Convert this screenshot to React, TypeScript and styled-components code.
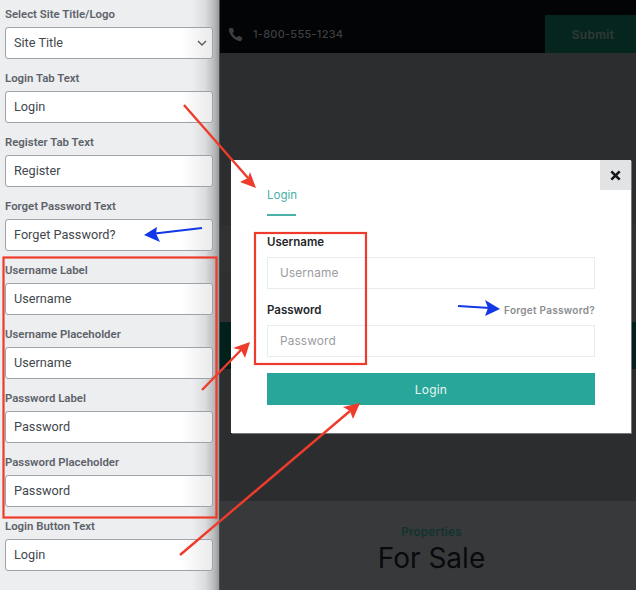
import React from "react";
import styled, { createGlobalStyle } from "styled-components";

const Global = createGlobalStyle`
  html, body { margin: 0; padding: 0; width: 636px; height: 590px; overflow: hidden; background: #2c2d2f; }
  * { box-sizing: border-box; }
`;
const Shell = styled.div`
  position: relative; width: 636px; height: 590px; display: flex; overflow: hidden;
  font-family: Inter, "Liberation Sans", sans-serif;
`;
const Sidebar = styled.aside`
  width: 220px; height: 590px; flex: none; padding: 5px 6px 0 5px; display: flex; flex-direction: column;
  font-family: Roboto, "Liberation Sans", sans-serif;
  background: linear-gradient(90deg, #edeef0 0, #edeef0 192px, #dcddde 205px, #b9babb 214px, #98999b 219px);
  border-right: 1px solid #4a4b4d;
`;
const Field = styled.label`
  display: flex; flex-direction: column; height: 64px; flex: none;
`;
const FieldLabel = styled.span`
  height: 22px; padding-top: 1px; line-height: 16px; font-size: 11.4px; font-weight: 600; color: #5d636a; white-space: nowrap;
`;
const InputBox = styled.div`
  position: relative; width: 208px; height: 32px; background: linear-gradient(90deg, #fff 0, #fff 175px, #e9e9ea 208px); border: 1px solid #9da3a9; border-radius: 3px;
  display: flex; align-items: center; padding-left: 8px; padding-bottom: 2px; font-size: 12.7px; color: #42474d;
`;
const Chevron = styled.svg`
  position: absolute; right: 4px; top: 9px; width: 12px; height: 12px;
`;
const Page = styled.main`
  flex: 1; display: flex; flex-direction: column; height: 590px; min-width: 0;
`;
const TopBar = styled.div`
  height: 53px; flex: none; background: #030405; display: flex; align-items: flex-end; justify-content: space-between;
`;
const Phone = styled.div`
  display: flex; align-items: center; gap: 9px; height: 38px; padding-left: 7px; color: #3e3f41; font-size: 11px; font-weight: 500; letter-spacing: .25px;
`;
const SubmitBlock = styled.div`
  width: 91px; height: 38px; display: flex; align-items: center; justify-content: center; padding-left: 5px; background: #07251f; color: #303a38; font-size: 12px; font-weight: 600; letter-spacing: .3px;
`;
const Band = styled.div<{ $h: number; $bg: string }>`
  height: ${p => p.$h}px; flex: none; background: ${p => p.$bg};
`;
const Section = styled.section`
  flex: 1; background: #38393b; display: flex; flex-direction: column; align-items: center; padding: 24px 0 0 7px;
`;
const Eyebrow = styled.div`
  font-size: 11.7px; line-height: 14px; font-weight: 600; color: #12332d; letter-spacing: .2px;
`;
const Heading = styled.h2`
  margin: 3px 0 0; font-size: 28px; line-height: 32px; font-weight: 400; color: #090a0b;
`;
const Modal = styled.div`
  position: absolute; left: 231px; top: 160px; width: 400px; height: 273px; background: #fff; padding: 0 36px;
  display: flex; flex-direction: column; box-shadow: 1px 1px 0 #77787a;
`;
const Close = styled.div`
  position: absolute; right: 0; top: 0; width: 31px; height: 30px; background: #e2e3e5; display: flex; align-items: center; justify-content: center;
`;
const Tab = styled.div`
  margin-top: 28px; width: 29px; height: 28px; border-bottom: 2px solid #4bb0a6; color: #48b0a6; font-size: 11.5px; line-height: 15px; font-weight: 400;
`;
const ModalRow = styled.div`
  display: flex; justify-content: space-between; align-items: center; height: 16px;
`;
const ModalLabel = styled.span`
  font-size: 11.5px; font-weight: 600; color: #23262a;
`;
const Forgot = styled.span`
  font-size: 10px; font-weight: 600; color: #8a8c8f; letter-spacing: .28px;
`;
const ModalInput = styled.div`
  height: 32px; margin-top: 7px; border: 1px solid #e8ecee; padding-left: 12px; display: flex; align-items: center; font-size: 11.8px; color: #9a9c9f; letter-spacing: .15px;
`;
const FormTop = styled.div`
  margin-top: 18px;
`;
const FormGap = styled.div`
  margin-top: 13px;
`;
const LoginButton = styled.div`
  margin-top: 16px; height: 32px; background: #27a699; color: #e9f6f4; display: flex; align-items: center; justify-content: center; font-size: 12px; letter-spacing: .2px;
`;
const Annotations = styled.svg`
  position: absolute; left: 0; top: 0; width: 636px; height: 590px; pointer-events: none;
`;

const fields = [
  ["Login Tab Text", "Login"], ["Register Tab Text", "Register"], ["Forget Password Text", "Forget Password?"],
  ["Username Label", "Username"], ["Username Placeholder", "Username"], ["Password Label", "Password"],
  ["Password Placeholder", "Password"], ["Login Button Text", "Login"],
];
const RED = "#ee3b2b", BLUE = "#1238e8";

export default function App() {
  return (
    <Shell>
      <Global />
      <Sidebar>
        <Field>
          <FieldLabel>Select Site Title/Logo</FieldLabel>
          <InputBox>
            Site Title
            <Chevron viewBox="0 0 12 12" fill="none" stroke="#555a60" strokeWidth="1.4"><path d="M2 4l4 4 4-4" /></Chevron>
          </InputBox>
        </Field>
        {fields.map(([l, v]) => (
          <Field key={l}>
            <FieldLabel>{l}</FieldLabel>
            <InputBox>{v}</InputBox>
          </Field>
        ))}
      </Sidebar>
      <Page>
        <TopBar>
          <Phone>
            <svg width="17" height="17" viewBox="0 0 24 24" fill="#3e3f41"><path d="M6.6 2.5 3.4 3.6C2.6 4 2.4 5 2.6 6c1.6 7.6 7.6 13.8 15.4 15.4 1 .2 2 0 2.4-.8l1.1-3.2c.2-.6 0-1.2-.6-1.5l-4-1.8c-.5-.2-1.1-.1-1.5.3l-1.5 1.9c-2.8-1.3-5-3.6-6.3-6.3l1.9-1.5c.4-.4.5-1 .3-1.5L8.100 3.100c-.3-.6-.9-.8-1.500-.6z" /></svg>
            1-800-555-1234
          </Phone>
          <SubmitBlock>Submit</SubmitBlock>
        </TopBar>
        <Band $h={172} $bg="#2c2d2f" />
        <Band $h={48} $bg="#2f3133" />
        <Band $h={49} $bg="#2d2f31" />
        <Band $h={47} $bg="#02201c" />
        <Band $h={132} $bg="#2c2d2f" />
        <Section>
          <Eyebrow>Properties</Eyebrow>
          <Heading>For Sale</Heading>
        </Section>
      </Page>
      <Modal>
        <Close>
          <svg width="11" height="11" viewBox="0 0 10 10" stroke="#16181a" strokeWidth="2.4"><path d="M1.200 1.200l7.600 7.600M8.800 1.200l-7.600 7.600" /></svg>
        </Close>
        <Tab>Login</Tab>
        <FormTop>
          <ModalRow><ModalLabel>Username</ModalLabel></ModalRow>
          <ModalInput>Username</ModalInput>
        </FormTop>
        <FormGap>
          <ModalRow><ModalLabel>Password</ModalLabel><Forgot>Forget Password?</Forgot></ModalRow>
          <ModalInput>Password</ModalInput>
        </FormGap>
        <LoginButton>Login</LoginButton>
      </Modal>
      <Annotations viewBox="0 0 636 590" fill="none">
        <rect x="3.500" y="257.500" width="213" height="260" stroke={RED} strokeWidth="2.200" />
        <rect x="255" y="233" width="111" height="131" stroke={RED} strokeWidth="2.200" />
        <g stroke={RED} strokeWidth="2.4">
          <path d="M184 105 248 178" />
          <path d="M202 390 242 349" />
          <path d="M180 555 350 411" />
        </g>
        <g fill={RED}>
          <path d="M256 188 240 182 248 178 250 172z" />
          <path d="M250 342 245 358 241 350 233 348z" />
          <path d="M360 403 353 419 350 411 343 407z" />
        </g>
        <path d="M202 228 155 233.500" stroke={BLUE} strokeWidth="2.200" />
        <path d="M144 235 157 227 156 233.500 160 242z" fill={BLUE} />
        <path d="M458 306 490 308" stroke={BLUE} strokeWidth="2.200" />
        <path d="M500 309 485 300 488 308 485 316z" fill={BLUE} />
      </Annotations>
    </Shell>
  );
}
